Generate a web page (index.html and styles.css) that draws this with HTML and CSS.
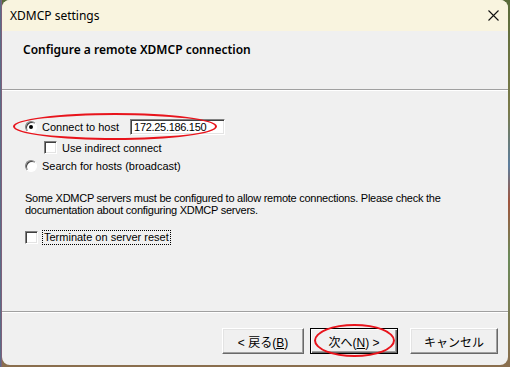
FILE: index.html
```html
<!DOCTYPE html>
<html>
<head>
<meta charset="utf-8">
<link rel="stylesheet" href="styles.css">
</head>
<body>
<div class="window">
  <div class="titlebar">
    <span class="title">XDMCP settings</span>
    <svg class="close" width="11" height="11" viewBox="0 0 11 11"><path d="M0.5 0.5 L10.5 10.5 M10.5 0.5 L0.5 10.5" stroke="#111" stroke-width="1.1"/></svg>
  </div>
  <div class="header">Configure a remote XDMCP connection</div>
  <div class="sep"></div>
  <div class="content">
    <div class="row row-host">
      <span class="radio checked"></span>
      <span class="label">Connect to host</span>
      <span class="field">172.25.186.150</span>
    </div>
    <div class="row row-indirect">
      <span class="check"></span>
      <span class="label">Use indirect connect</span>
    </div>
    <div class="row row-search">
      <span class="radio"></span>
      <span class="label">Search for hosts (broadcast)</span>
    </div>
    <p class="note">Some XDMCP servers must be configured to allow remote connections. Please check the<br>documentation about configuring XDMCP servers.</p>
    <div class="row row-term">
      <span class="check"></span>
      <span class="label focus">Terminate on server reset</span>
    </div>
  </div>
  <div class="sep"></div>
  <div class="buttons">
    <button class="btn back">&lt; 戻る(<u>B</u>)</button>
    <button class="btn next default">次へ(<u>N</u>) &gt;</button>
    <button class="btn cancel">キャンセル</button>
  </div>
  <div class="ring ring-host"></div>
  <div class="ring ring-next"></div>
</div>
</body>
</html>
```
FILE: styles.css
```css
html, body {
  margin: 0;
  padding: 0;
}
body {
  width: 510px;
  height: 367px;
  overflow: hidden;
  background:
    linear-gradient(90deg, #6b6a55 0px, #4a6fb8 1px, #b4533f 2px, transparent 2px),
    linear-gradient(180deg, #5a6b3a 0%, #7a7a4a 30%, #5c7e9e 45%, #a0553e 55%, #6a8a5a 70%, #8a6e4e 100%);
  font-family: "Liberation Sans", Arial, sans-serif;
  font-size: 11px;
  color: #000;
}
.window {
  position: relative;
  margin-left: 2px;
  width: 506px;
  height: 365px;
  background: #f0f0f0;
  border-radius: 8px;
  overflow: hidden;
  display: flex;
  flex-direction: column;
}
.titlebar {
  height: 31px;
  flex: none;
  background: #f9f4df;
  display: flex;
  align-items: center;
  justify-content: space-between;
  padding: 0 8px 0 8px;
}
.title {
  font-family: "Noto Sans", "Open Sans", sans-serif;
  font-size: 12px;
  color: #000;
  margin-top: -1px;
}
.close {
  margin-right: 1px;
  margin-top: -1px;
}
.header {
  height: 58px;
  flex: none;
  box-sizing: border-box;
  padding: 10px 0 0 21px;
  font-family: "Noto Sans", "Open Sans", sans-serif;
  font-size: 12px;
  font-weight: 600;
  color: #000;
}
.sep {
  flex: none;
  height: 0;
  border-top: 1px solid #a0a0a0;
  border-bottom: 1px solid #ffffff;
}
.content {
  flex: 1;
  padding-left: 21px;
}
.row {
  display: flex;
  align-items: center;
}
.label {
  white-space: nowrap;
  letter-spacing: 0;
}
.row-host {
  margin-top: 28px;
  height: 16px;
  padding-left: 2px;
}
.row-host .label {
  margin-left: 5px;
}
.field {
  margin-left: 11px;
  width: 95px;
  height: 16px;
  box-sizing: border-box;
  background: #fff;
  border-top: 1px solid #808080;
  border-left: 1px solid #808080;
  border-right: 1px solid #fff;
  border-bottom: 1px solid #fff;
  box-shadow: inset 1px 1px 0 #404040, inset -1px -1px 0 #e3e3e3;
  padding: 1px 0 0 3px;
  font-size: 11px;
  line-height: 13px;
  letter-spacing: -0.3px;
}
.radio {
  width: 12px;
  height: 12px;
  box-sizing: border-box;
  border-radius: 50%;
  background: #fff;
  border: 1px solid;
  border-color: #808080 #fff #fff #808080;
  box-shadow: inset 1px 1px 0 #404040;
  position: relative;
  flex: none;
}
.radio.checked::after {
  content: "";
  position: absolute;
  left: 3px;
  top: 3px;
  width: 4px;
  height: 4px;
  border-radius: 50%;
  background: #000;
}
.check {
  width: 13px;
  height: 13px;
  box-sizing: border-box;
  background: #fff;
  border: 1px solid;
  border-color: #808080 #fff #fff #808080;
  box-shadow: inset 1px 1px 0 #404040, inset -1px -1px 0 #e3e3e3;
  flex: none;
}
.row-indirect {
  margin-top: 6px;
  height: 13px;
  padding-left: 21px;
}
.row-indirect .label {
  margin-left: 5px;
}
.row-search {
  margin-top: 6px;
  height: 12px;
  padding-left: 2px;
}
.row-search .label {
  margin-left: 5px;
}
.note {
  margin: 20px 0 0 2px;
  line-height: 12px;
  white-space: nowrap;
  letter-spacing: -0.25px;
}
.row-term {
  margin-top: 14px;
  height: 14px;
  padding-left: 2px;
}
.row-term .label {
  margin-left: 5px;
  outline: 1px dotted #000;
  padding: 0 1px;
  line-height: 13px;
}
.buttons {
  flex: none;
  height: 52px;
  box-sizing: border-box;
  padding: 15px 0 0 219px;
  display: flex;
  align-items: flex-start;
}
.btn {
  height: 26px;
  box-sizing: border-box;
  font-family: "Liberation Sans", "Noto Sans CJK JP", sans-serif;
  font-size: 12px;
  background: #f0f0f0;
  color: #000;
  border: 1px solid;
  border-color: #fff #696969 #696969 #fff;
  box-shadow: inset -1px -1px 0 #a0a0a0, inset 1px 1px 0 #e3e3e3;
  padding: 0;
  margin: 0;
}
.btn u {
  text-decoration: underline;
}
.back {
  width: 82px;
  margin-left: 1px;
}
.next {
  width: 88px;
  margin-left: 6px;
}
.cancel {
  width: 88px;
  margin-left: 12px;
}
.btn.default {
  border: 1px solid #000;
  box-shadow: inset 1px 1px 0 #fff, inset -1px -1px 0 #696969, inset -2px -2px 0 #a0a0a0;
}
.ring {
  position: absolute;
  border: 2px solid #e8141c;
  border-radius: 50%;
  box-sizing: border-box;
}
.ring-host {
  left: 11px;
  top: 113px;
  width: 204px;
  height: 27px;
}
.ring-next {
  left: 312px;
  top: 324px;
  width: 81px;
  height: 33px;
}
```
